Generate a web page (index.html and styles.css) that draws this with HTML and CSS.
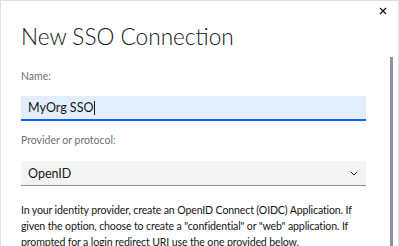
FILE: index.html
```html
<!DOCTYPE html>
<html lang="en">
<head>
    <meta charset="UTF-8">
    <meta name="viewport" content="width=device-width, initial-scale=1.0">
    <title>New SSO Connection</title>
    <link rel="stylesheet" href="styles.css">
</head>
<body>

<div class="modal">
    <button class="close-btn" aria-label="Close">
        <svg width="8" height="8" viewBox="0 0 8 8"><path d="M1 1L7 7M7 1L1 7" stroke="#161616" stroke-width="1.3"/></svg>
    </button>

    <h2 class="modal-title">New SSO Connection</h2>

    <div class="modal-body">
        <div class="scroll-thumb"></div>

        <label class="field-label" for="name">Name:</label>
        <div class="text-input">
            <span id="name">MyOrg SSO</span><span class="caret"></span>
        </div>

        <label class="field-label provider-label">Provider or protocol:</label>
        <div class="select">
            <span>OpenID</span>
            <svg width="8" height="5" viewBox="0 0 8 5"><path d="M0.8 0.8L4 4L7.2 0.8" fill="none" stroke="#161616" stroke-width="1"/></svg>
        </div>

        <p class="help-text">In your identity provider, create an OpenID Connect (OIDC) Application. If given the option, choose to create a "confidential" or "web" application. If prompted for a login redirect URI use the one provided below.</p>
    </div>
</div>

</body>
</html>
```

FILE: styles.css
```css
body {
    margin: 0;
    font-family: Lato, "Noto Sans", sans-serif;
    color: #161616;
    background: #fff;
    overflow: hidden;
}

.modal {
    position: relative;
    width: 399px;
    height: 246px;
    box-sizing: border-box;
    border: 1px solid #e0e0e0;
    border-bottom: none;
    padding: 0 32px 0 20px;
}

.close-btn {
    position: absolute;
    top: 4px;
    right: 9px;
    width: 12px;
    height: 12px;
    padding: 0;
    border: none;
    background: none;
    display: flex;
    align-items: center;
    justify-content: center;
}

.modal-title {
    margin: 0;
    padding-top: 20px;
    font-size: 22.6px;
    font-weight: 300;
    line-height: 32px;
    height: 32px;
}

.modal-body {
    display: flex;
    flex-direction: column;
}

.scroll-thumb {
    position: absolute;
    top: 56px;
    right: 5px;
    width: 3px;
    height: 200px;
    background: #8c94a3;
}

.field-label {
    font-size: 10.5px;
    line-height: 16px;
    color: #6f6f6f;
    margin-top: 15px;
    margin-bottom: 12px;
}

.provider-label {
    margin-top: 11px;
    margin-bottom: 13px;
}

.text-input {
    height: 23px;
    background: #e2eefd;
    border-bottom: 2px solid #0f62fe;
    display: flex;
    align-items: center;
    padding: 0 7px;
    font-size: 12.5px;
}

.caret {
    display: inline-block;
    width: 1px;
    height: 14px;
    background: #161616;
    margin-left: 1px;
}

.select {
    height: 24px;
    background: #f4f4f4;
    border-bottom: 1px solid #8d8d8d;
    display: flex;
    align-items: center;
    justify-content: space-between;
    padding: 0 8px 0 7px;
    font-size: 12.5px;
}

.help-text {
    margin: 16px 0 0;
    font-size: 10.6px;
    line-height: 16px;
    letter-spacing: -0.15px;
    padding-right: 4px;
}
```
